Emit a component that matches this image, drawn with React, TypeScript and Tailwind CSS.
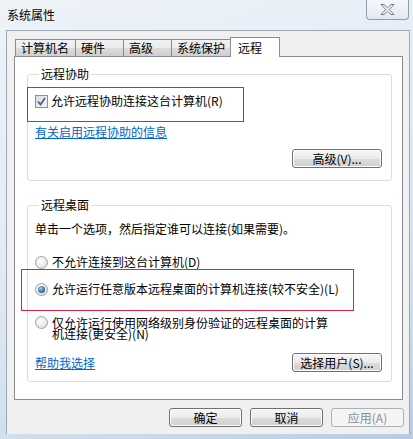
import React from "react";

const font = "font-['Noto_Sans_CJK_SC','Noto_Sans',sans-serif]";

function Btn({ label, disabled, className = "" }: { label: string; disabled?: boolean; className?: string }) {
  return (
    <div
      className={
        "flex h-[19px] items-center justify-center rounded-[3px] border text-[12px] leading-[12px] " +
        (disabled
          ? "border-[#adb2b5] bg-[#f4f4f4] text-[#8d8d8d] "
          : "border-[#707070] bg-[linear-gradient(to_bottom,#f6f6f6_0%,#ebebeb_50%,#dddddd_51%,#cfcfcf_100%)] text-black shadow-[inset_0_0_0_1px_#fcfcfc] ") +
        className
      }
    >
      {label}
    </div>
  );
}

function Radio({ checked }: { checked?: boolean }) {
  return (
    <div className="flex h-[13px] w-[13px] shrink-0 items-center justify-center rounded-full border border-[#a0a0a0] bg-[radial-gradient(circle_at_40%_35%,#ffffff_0%,#e8e8e8_60%,#cfcfcf_100%)]">
      {checked && (
        <div className="flex h-[7px] w-[7px] items-center justify-center rounded-full bg-[radial-gradient(circle_at_40%_35%,#9fd2f2_0%,#2c6fa5_60%,#1b3f63_100%)]" />
      )}
    </div>
  );
}

function Tab({ label, w, active }: { label: string; w: string; active?: boolean }) {
  return (
    <div
      className={
        "flex items-center border border-[#898c95] text-[12px] " +
        w +
        (active
          ? " relative z-10 -mb-px h-[20px] border-b-0 bg-white pl-[7px] pt-[1px]"
          : " h-[17px] -mr-px border-b-0 bg-[linear-gradient(to_bottom,#f2f2f2_0%,#ebebeb_50%,#dddddd_51%,#cfcfcf_100%)] pl-[5px]")
      }
    >
      {label}
    </div>
  );
}

export default function App() {
  return (
    <div className={"relative h-[439px] w-[413px] overflow-hidden bg-[linear-gradient(160deg,#eef3f8_0%,#e2ebf4_45%,#cddcec_80%,#b6cce4_100%)] text-black " + font}>
      {/* title bar */}
      <div className="flex h-[30px] items-start justify-between">
        <div className="pl-[7px] pt-[7px] text-[12px] leading-[16px]">系统属性</div>
        <div className="mr-[4px] flex h-[20px] w-[43px] items-center justify-center rounded-b-[4px] border border-t-0 border-[#8f9cae] bg-[linear-gradient(to_bottom,#f6f8fb,#e3e9f0)]">
          <svg width="17" height="13" viewBox="0 0 17 13">
            <path
              d="M2 1.5 L5 1.5 L8.5 4.8 L12 1.5 L15 1.5 L10.2 6.5 L15 11.5 L12 11.5 L8.5 8.2 L5 11.5 L2 11.5 L6.8 6.5 Z"
              fill="#fbfbfb"
              stroke="#6f7781"
              strokeWidth="1"
              strokeLinejoin="round"
            />
          </svg>
        </div>
      </div>

      {/* client */}
      <div className="ml-[6px] flex h-[404px] w-[404px] flex-col border border-b-0 border-[#9aa8b8] bg-[#f0f0f0] pl-[7px]">
        {/* tabs */}
        <div className="mt-[6px] flex items-end pl-px">
          <Tab label="计算机名" w="w-[61px]" />
          <Tab label="硬件" w="w-[49px]" />
          <Tab label="高级" w="w-[49px]" />
          <Tab label="系统保护" w="w-[60px]" />
          <Tab label="远程" w="w-[50px]" active />
        </div>

        {/* panel */}
        <div className="flex h-[344px] w-[389px] flex-col border border-[#898c95] bg-white">
          {/* 远程协助 */}
          <fieldset className="ml-[12px] mt-[10px] w-[365px] rounded-[3px] border border-[#d5dfe5] px-[7px] pb-[12px]">
            <legend className="ml-[4px] px-[2px] text-[12px] leading-[14px]">远程协助</legend>
            <div className="mt-[12px] flex h-[16px] items-center text-[12px]">
              <div className="flex h-[13px] w-[13px] items-center justify-center border border-[#8e8f8f] bg-[linear-gradient(135deg,#dcdcdc,#f6f6f6)]">
                <svg width="9" height="9" viewBox="0 0 9 9">
                  <path d="M1 4.5 L3.5 7.5 L8 1" fill="none" stroke="#4a5f97" strokeWidth="1.8" />
                </svg>
              </div>
              <span className="ml-[3px]">允许远程协助连接这台计算机(R)</span>
            </div>
            <div className="mt-[15px] h-[16px] text-[12px] leading-[16px] text-[#0066cc] underline">有关启用远程协助的信息</div>
            <div className="mt-[9px] flex justify-end pr-[2px]">
              <Btn label="高级(V)..." className="w-[90px]" />
            </div>
          </fieldset>

          {/* 远程桌面 */}
          <fieldset className="ml-[12px] mt-[17px] w-[365px] rounded-[3px] border border-[#d5dfe5] px-[7px] pb-[9px]">
            <legend className="ml-[4px] px-[2px] text-[12px] leading-[14px]">远程桌面</legend>
            <div className="mt-[9px] h-[16px] text-[12px] leading-[16px]">单击一个选项，然后指定谁可以连接(如果需要)。</div>
            <div className="mt-[17px] flex h-[16px] items-center gap-[4px] text-[12px]">
              <Radio />
              <span>不允许连接到这台计算机(D)</span>
            </div>
            <div className="mt-[11px] flex h-[16px] items-center gap-[4px] text-[12px]">
              <Radio checked />
              <span>允许运行任意版本远程桌面的计算机连接(较不安全)(L)</span>
            </div>
            <div className="mt-[20px] flex items-start gap-[4px] text-[12px]">
              <div className="mt-[-1px]">
                <Radio />
              </div>
              <span className="w-[280px] leading-[11px]">仅允许运行使用网络级别身份验证的远程桌面的计算机连接(更安全)(N)</span>
            </div>
            <div className="mt-[14px] flex h-[19px] items-center justify-between pr-[2px]">
              <span className="text-[12px] leading-[16px] text-[#0066cc] underline">帮助我选择</span>
              <Btn label="选择用户(S)..." className="w-[90px]" />
            </div>
          </fieldset>
        </div>

        {/* bottom buttons */}
        <div className="mt-[8px] flex justify-end gap-[8px] pr-[5px]">
          <Btn label="确定" className="w-[73px]" />
          <Btn label="取消" className="w-[73px]" />
          <Btn label="应用(A)" disabled className="w-[73px]" />
        </div>
      </div>

      {/* red annotation boxes */}
      <div className="pointer-events-none absolute left-[27px] top-[87px] h-[35px] w-[217px] border border-[#dc2342]" />
      <div className="pointer-events-none absolute left-[21px] top-[269px] h-[42px] w-[333px] border border-[#dc2342]" />
    </div>
  );
}
